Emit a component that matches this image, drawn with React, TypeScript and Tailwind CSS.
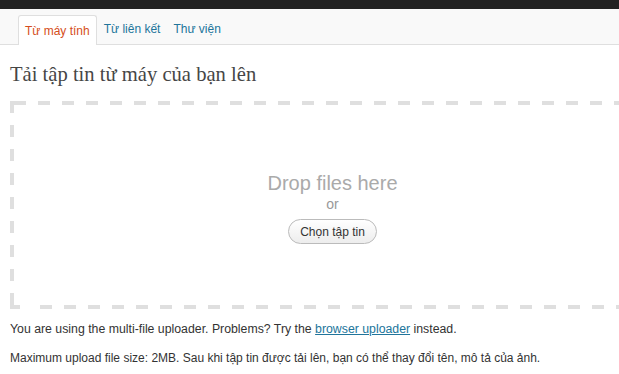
import React from "react";

export default function App() {
  return (
    <div className="w-[619px] h-[374px] overflow-hidden bg-white font-['Liberation_Sans',Arial,sans-serif] text-[12px] text-[#333]">
      {/* top admin bar */}
      <div className="h-[9px] bg-[#222]" />

      {/* tabs */}
      <div className="h-[36px] bg-[#f9f9f9] border-b border-[#dfdfdf] flex items-end pl-[18px]">
        <div className="h-[30px] -mb-px px-[6px] flex items-center bg-white border border-b-0 border-[#dfdfdf] rounded-t-[3px] text-[#d54e21]">
          Từ máy tính
        </div>
        <div className="h-[30px] px-[7px] flex items-center text-[#21759b]">Từ liên kết</div>
        <div className="h-[30px] px-[6px] flex items-center text-[#21759b]">Thư viện</div>
      </div>

      <div className="pl-[10px]">
        <h3 className="mt-[17px] font-['Liberation_Serif',Georgia,serif] text-[20.6px] leading-[24px] text-[#464646]">
          Tải tập tin từ máy của bạn lên
        </h3>

        {/* drop zone, dashed edges drawn like the 4px dashed border */}
        <div className="mt-[15px] w-[645px] h-[208px] flex flex-col items-center pt-[70px] [background:repeating-linear-gradient(90deg,#dfdfdf_0_12px,transparent_12px_24px)_4px_0/100%_4px_no-repeat,repeating-linear-gradient(180deg,#dfdfdf_0_12px,transparent_12px_24px)_0_0/4px_100%_no-repeat,linear-gradient(#dfdfdf,#dfdfdf)_0_100%/10px_4px_no-repeat,repeating-linear-gradient(90deg,#dfdfdf_0_12px,transparent_12px_24px)_30px_100%/100%_4px_no-repeat]">
          <p className="text-[20px] leading-[24px] text-[#aaa]">Drop files here</p>
          <p className="text-[14px] leading-[19px] text-[#999]">or</p>
          <button className="mt-[5px] h-[25px] w-[89px] rounded-full border border-[#bbb] bg-gradient-to-b from-white to-[#ededed] text-[12px] text-[#333]">
            Chọn tập tin
          </button>
        </div>

        <p className="mt-[13px] leading-[15px] text-[12.3px]">
          You are using the multi-file uploader. Problems? Try the{" "}
          <a href="#" className="text-[#21759b] underline">
            browser uploader
          </a>{" "}
          instead.
        </p>
        <p className="mt-[14px] leading-[15px]">
          Maximum upload file size: 2MB. Sau khi tập tin được tải lên, bạn có thể thay đổi tên, mô tả của ảnh.
        </p>
      </div>
    </div>
  );
}
